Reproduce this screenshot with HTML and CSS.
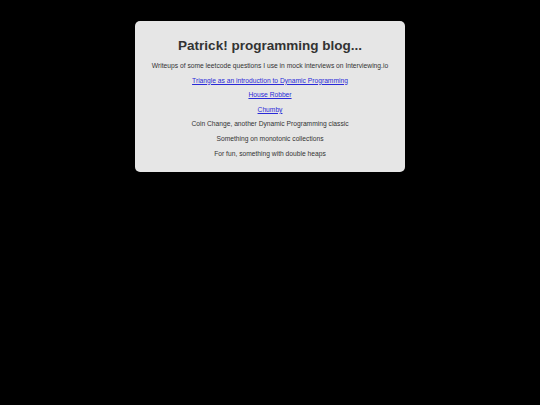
FILE: index.html
```html
<!DOCTYPE html>
<html>
<head>
<meta charset="utf-8">
<link rel="stylesheet" href="styles.css">
</head>
<body>
<main class="card">
  <h1 class="title">Patrick! programming blog...</h1>
  <ul class="list">
    <li class="item">Writeups of some leetcode questions I use in mock interviews on Interviewing.io</li>
    <li class="item"><a class="link" href="#">Triangle as an introduction to Dynamic Programming</a></li>
    <li class="item"><a class="link" href="#">House Robber</a></li>
    <li class="item"><a class="link" href="#">Chumby</a></li>
    <li class="item">Coin Change, another Dynamic Programming classic</li>
    <li class="item">Something on monotonic collections</li>
    <li class="item">For fun, something with double heaps</li>
  </ul>
</main>
</body>
</html>
```

FILE: styles.css
```css
html, body {
  margin: 0;
  padding: 0;
  background: #000;
}
body {
  font-family: "Liberation Sans", Arial, sans-serif;
  color: #333;
  padding-top: 21px;
}
.card {
  width: 270px;
  margin: 0 auto;
  background: #e6e6e6;
  border-radius: 5px;
  padding: 17px 0 14px;
  box-sizing: border-box;
  text-align: center;
}
.title {
  margin: 0 0 8px;
  font-size: 13.5px;
  line-height: 16px;
  font-weight: bold;
}
.list {
  list-style: none;
  margin: 0;
  padding: 0;
  display: flex;
  flex-direction: column;
  gap: 6.6px;
}
.item {
  font-size: 6.7px;
  line-height: 8px;
}
.link {
  color: #2a2ad8;
}
```
